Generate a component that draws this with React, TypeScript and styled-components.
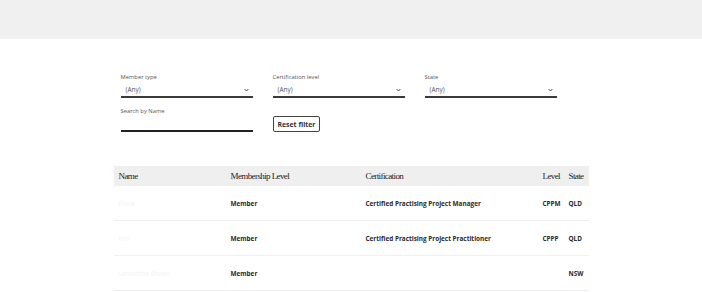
import styled, { createGlobalStyle } from "styled-components";

const GlobalStyle = createGlobalStyle`
    body {
        margin: 0;
        background: #ffffff;
        font-family: "Open Sans", "Liberation Sans", sans-serif;
        color: #222;
    }
`;

const TopBand = styled.div`
    height: 38px;
    background-color: #eff0ef;
    border-bottom: 1px solid #f4f4f4;
`;

const Main = styled.div`
    width: 475px;
    margin: 0 auto;
    padding-top: 34px;
`;

const Filters = styled.div`
    display: grid;
    grid-template-columns: repeat(3, 132px);
    column-gap: 20px;
    row-gap: 9px;
    align-items: end;
    padding-left: 7px;
`;

const Field = styled.div`
    display: flex;
    flex-direction: column;
`;

const Label = styled.label`
    font-size: 5.8px;
    line-height: 8px;
    color: #555;
    margin-bottom: 2px;
`;

const SelectBox = styled.div`
    height: 13px;
    display: flex;
    align-items: center;
    justify-content: space-between;
    padding: 0 4px 0 5px;
    border-bottom: 2px solid #3a3a3a;
    font-size: 6.5px;
    color: #555;
`;

const TextInput = styled.div`
    height: 13px;
    border-bottom: 2px solid #222;
`;

const ResetButton = styled.button`
    justify-self: start;
    height: 16px;
    padding: 0 4px;
    border: 1px solid #444;
    border-radius: 2px;
    background: #fff;
    font-family: "Open Sans", "Liberation Sans", sans-serif;
    font-weight: 700;
    font-size: 6.9px;
    color: #333;
    cursor: pointer;
`;

const Table = styled.table`
    width: 100%;
    margin-top: 34px;
    border-collapse: collapse;
`;

const Th = styled.th<{ $w?: number }>`
    width: ${(p) => (p.$w ? `${p.$w}px` : "auto")};
    height: 20px;
    padding: 0 0 0 5px;
    background-color: #efefef;
    text-align: left;
    font-family: "Liberation Serif", "DejaVu Serif", serif;
    font-weight: 400;
    font-size: 9px;
    letter-spacing: -0.6px;
    color: #222;
`;

const Td = styled.td<{ $faint?: boolean }>`
    height: 34px;
    padding: 0 0 0 5px;
    border-bottom: 1px solid #efefef;
    font-size: 6.4px;
    font-weight: ${(p) => (p.$faint ? 400 : 700)};
    color: ${(p) => (p.$faint ? "#f3f3f3" : "#2a2a2a")};
`;

const Chevron = () => (
    <svg width="5" height="4" viewBox="0 0 5 4">
        <path d="M0.6 1 L2.5 3 L4.4 1" fill="none" stroke="#444" strokeWidth="0.9" />
    </svg>
);

const rows = [
    { name: "Fiona", level: "Member", cert: "Certified Practising Project Manager", code: "CPPM", state: "QLD" },
    { name: "Ken", level: "Member", cert: "Certified Practising Project Practitioner", code: "CPPP", state: "QLD" },
    { name: "Samantha Brown", level: "Member", cert: "", code: "", state: "NSW" },
];

export default function App() {
    return (
        <>
            <GlobalStyle />
            <TopBand />
            <Main>
                <Filters>
                    <Field>
                        <Label>Member type</Label>
                        <SelectBox>(Any)<Chevron /></SelectBox>
                    </Field>
                    <Field>
                        <Label>Certification level</Label>
                        <SelectBox>(Any)<Chevron /></SelectBox>
                    </Field>
                    <Field>
                        <Label>State</Label>
                        <SelectBox>(Any)<Chevron /></SelectBox>
                    </Field>
                    <Field>
                        <Label>Search by Name</Label>
                        <TextInput />
                    </Field>
                    <ResetButton>Reset filter</ResetButton>
                </Filters>
                <Table>
                    <thead>
                        <tr>
                            <Th $w={107}>Name</Th>
                            <Th $w={130}>Membership Level</Th>
                            <Th $w={172}>Certification</Th>
                            <Th $w={21}>Level</Th>
                            <Th>State</Th>
                        </tr>
                    </thead>
                    <tbody>
                        {rows.map((r) => (
                            <tr key={r.name}>
                                <Td $faint>{r.name}</Td>
                                <Td>{r.level}</Td>
                                <Td>{r.cert}</Td>
                                <Td>{r.code}</Td>
                                <Td>{r.state}</Td>
                            </tr>
                        ))}
                    </tbody>
                </Table>
            </Main>
        </>
    );
}
